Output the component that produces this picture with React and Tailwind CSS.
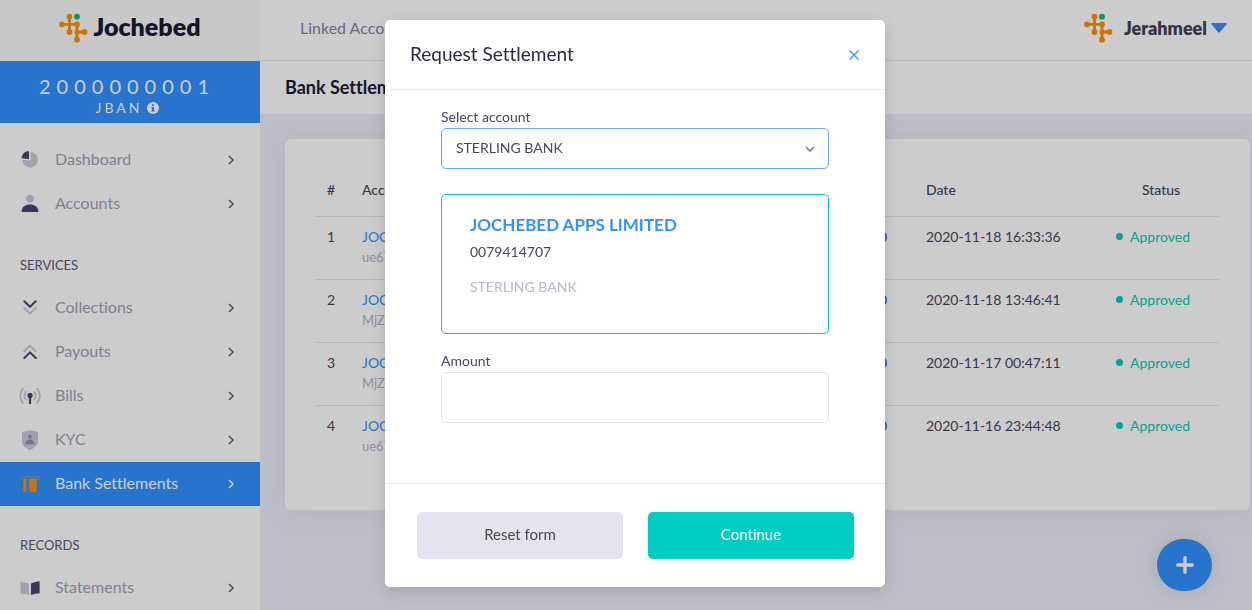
import { useState } from "react";

const services = [
  { name: "Collections", icon: <CollectionsIcon /> },
  { name: "Payouts", icon: <PayoutsIcon /> },
  { name: "Bills", icon: <BillsIcon /> },
  { name: "KYC", icon: <KycIcon /> },
  { name: "Bank Settlements", icon: <BankIcon />, active: true },
];

const settlements = [
  { id: 1, name: "JOCHEBED", ref: "ue6TqLw92x", amount: "1,000.00", date: "2020-11-18 16:33:36" },
  { id: 2, name: "JOCHEBED", ref: "MjZ0pRk41s", amount: "1,000.00", date: "2020-11-18 13:46:41" },
  { id: 3, name: "JOCHEBED", ref: "MjZ0cHe73n", amount: "1,000.00", date: "2020-11-17 00:47:11" },
  { id: 4, name: "JOCHEBED", ref: "ue6TmBf58z", amount: "1,000.00", date: "2020-11-16 23:44:48" },
];

function Logo() {
  return (
    <svg viewBox="0 0 30 30" className="h-[30px] w-[30px] shrink-0" aria-hidden="true">
      <g stroke="#ff9008" strokeWidth="2.8" fill="none">
        <path d="M3 11.3H18V26.7M10.5 3.7V19M18 19H25.5" />
      </g>
      <g fill="#ff9008">
        <circle cx="10.5" cy="3.7" r="2.9" />
        <circle cx="3" cy="11.3" r="2.9" />
        <circle cx="18" cy="11.3" r="2.9" />
        <circle cx="10.5" cy="19" r="2.9" />
        <circle cx="18" cy="19" r="2.5" />
        <circle cx="25.5" cy="19" r="2.9" />
        <circle cx="18" cy="26.7" r="2.9" />
      </g>
      <circle cx="18" cy="3.7" r="2.9" fill="#0abf73" />
    </svg>
  );
}

function Icon({ children }) {
  return (
    <svg viewBox="0 0 24 24" className="h-6 w-6 shrink-0" fill="none" aria-hidden="true">
      {children}
    </svg>
  );
}

function DashboardIcon() {
  return (
    <Icon>
      <path d="M12.6 4A7.7 7.7 0 1 1 4.4 12L12.6 12.6Z" fill="#cac8d8" />
      <path d="M11 2.9V11.2L3.5 10.2A7.6 7.6 0 0 1 11 2.9Z" fill="#4a4370" />
    </Icon>
  );
}

function AccountsIcon() {
  return (
    <Icon>
      <circle cx="12" cy="6.8" r="3.8" fill="#cac8d8" />
      <path d="M3.5 19.2C3.8 15 7.5 12.4 12 12.4S20.2 15 20.5 19.2Q20.5 20 19.6 20H4.4Q3.5 20 3.5 19.2Z" fill="#4a4370" />
    </Icon>
  );
}

function CollectionsIcon() {
  return (
    <Icon>
      <g strokeWidth="2" strokeLinecap="round" strokeLinejoin="round">
        <path d="M6.3 12L12 17.6L17.7 12" stroke="#cac8d8" />
        <path d="M6.3 5.2L12 10.8L17.7 5.2" stroke="#4a4370" />
      </g>
    </Icon>
  );
}

function PayoutsIcon() {
  return (
    <Icon>
      <g strokeWidth="2" strokeLinecap="round" strokeLinejoin="round">
        <path d="M6.3 11.2L12 5.6L17.7 11.2" stroke="#cac8d8" />
        <path d="M6.3 18L12 12.4L17.7 18" stroke="#4a4370" />
      </g>
    </Icon>
  );
}

function BillsIcon() {
  return (
    <Icon>
      <g stroke="#cac8d8" strokeWidth="1.7" strokeLinecap="round">
        <path d="M4.8 4.8Q-0.4 11.8 4.8 18.8M19.2 4.8Q24.4 11.8 19.2 18.8" />
        <path d="M7.9 7.8Q4.9 11.8 7.9 15.8M16.1 7.8Q19.1 11.8 16.1 15.8" />
      </g>
      <circle cx="12" cy="11.4" r="2.6" fill="#4a4370" />
      <path d="M12 12V20" stroke="#4a4370" strokeWidth="2.2" />
    </Icon>
  );
}

function KycIcon() {
  return (
    <Icon>
      <path d="M4 4L12 2.2L20 4V13.2C20 17.4 16.2 20.2 12 22C7.8 20.2 4 17.4 4 13.2Z" fill="#cac8d8" />
      <circle cx="12" cy="8.6" r="2" fill="#9794ad" />
      <path d="M7.4 16.2C7.6 13.3 9.4 11.6 12 11.6S16.4 13.3 16.6 16.2Z" fill="#9794ad" />
    </Icon>
  );
}

function BankIcon() {
  return (
    <Icon>
      <path d="M2.5 4H21.5V8.5H19V20.4H5V8.5H2.5Z" fill="#7a8ea6" opacity="0.85" />
      <rect x="5.6" y="7" width="2.8" height="13" fill="#ff9008" />
      <rect x="8.4" y="8.5" width="2.6" height="12" fill="#3292ff" opacity="0.7" />
      <rect x="11.4" y="7" width="7" height="13" fill="#ff9008" />
    </Icon>
  );
}

function StatementsIcon() {
  return (
    <Icon>
      <path d="M2.5 6Q6.5 5.6 10.8 7.6V19Q6.5 17.4 2.5 17.8Z" fill="#cac8d8" />
      <path d="M13 7.6Q17 5.4 21.6 5.2V17.2Q17 17.2 13 19Z" fill="#4a4370" />
    </Icon>
  );
}

function Chevron({ className }) {
  return (
    <svg viewBox="0 0 10 10" className={className} fill="none" stroke="currentColor" strokeWidth="1.6" aria-hidden="true">
      <path d="M3 1L7 5L3 9" />
    </svg>
  );
}

function NavItem({ name, icon, active }) {
  return (
    <a
      href="#"
      className={
        active
          ? "flex h-11 items-center bg-[#3292ff] pr-6 pl-[18px] text-white"
          : "flex h-11 items-center pr-6 pl-[18px] text-[#a3a0b8]"
      }
    >
      {icon}
      <span className="ml-[13px] flex-1 pb-0.5 text-base">{name}</span>
      <Chevron className={active ? "h-2.5 w-2.5 text-white" : "h-2.5 w-2.5 text-[#645f85]"} />
    </a>
  );
}

function Sidebar() {
  return (
    <aside className="w-[260px] shrink-0 bg-white">
      <div className="flex h-[61px] items-center justify-center gap-1 bg-[#fafafa] pb-1.5">
        <Logo />
        <span className="pb-0.5 text-[25px] font-extrabold text-[#1b1935]">Jochebed</span>
      </div>
      <div className="flex h-[62px] flex-col items-center justify-center bg-[#3292ff] pt-2 pr-1.5 text-white">
        <div className="text-xl leading-6 tracking-[6px]">2000000001</div>
        <div className="flex items-center gap-1 text-sm leading-5">
          <span className="tracking-[3px]">JBAN</span>
          <svg viewBox="0 0 12 12" className="h-3 w-3" aria-hidden="true">
            <circle cx="6" cy="6" r="6" fill="#fff" />
            <path d="M5 2.2H7V4H5ZM4.4 4.9H7V8.2H7.6V9.6H4.4V8.2H5V6.3H4.4Z" fill="#3292ff" />
          </svg>
        </div>
      </div>
      <nav className="pt-[15px]">
        <NavItem name="Dashboard" icon={<DashboardIcon />} />
        <NavItem name="Accounts" icon={<AccountsIcon />} />
        <h4 className="px-5 pt-[29px] pb-[11px] text-[13px] leading-5 text-[#5c5776]">SERVICES</h4>
        {services.map((item) => (
          <NavItem key={item.name} {...item} />
        ))}
        <h4 className="px-5 pt-[29px] pb-[11px] text-[13px] leading-5 text-[#5c5776]">RECORDS</h4>
        <NavItem name="Statements" icon={<StatementsIcon />} />
      </nav>
    </aside>
  );
}

function SettlementTable() {
  return (
    <table className="w-full table-fixed text-sm leading-5 text-[#48465b]">
      <colgroup>
        <col className="w-[31px]" />
        <col />
        <col className="w-[200px]" />
        <col className="w-[192px]" />
        <col className="w-[116px]" />
      </colgroup>
      <thead>
        <tr className="h-[46px] border-b border-[#e6e7f0] text-left">
          <th className="pb-1.5 pl-[11px] font-medium">#</th>
          <th className="pb-1.5 pl-[15px] font-medium">Account</th>
          <th className="pb-1.5 text-center font-medium">Amount</th>
          <th className="pb-1.5 pl-[15px] font-medium">Date</th>
          <th className="pb-1.5 text-center font-medium">Status</th>
        </tr>
      </thead>
      <tbody>
        {settlements.map((row) => (
          <tr key={row.id} className="h-[63px] border-b border-[#e6e7f0] align-top last:border-b-0">
            <td className="pt-2.5 pl-[11px]">{row.id}</td>
            <td className="pt-2.5 pl-[15px]">
              <a href="#" className="block text-[#3292ff]">{row.name}</a>
              <span className="text-[13px] text-[#b5b3c8]">{row.ref}</span>
            </td>
            <td className="pt-2.5 pr-6 text-right">{row.amount}</td>
            <td className="pt-2.5 pl-[15px]">{row.date}</td>
            <td className="pt-2.5">
              <span className="flex items-center justify-center gap-[7px] pr-4 text-[#00cec1]">
                <span className="h-[7px] w-[7px] shrink-0 rounded-full bg-[#00cec1]" />
                Approved
              </span>
            </td>
          </tr>
        ))}
      </tbody>
    </table>
  );
}

function SettlementModal({ onClose }) {
  const [bank, setBank] = useState("STERLING BANK");
  const [amount, setAmount] = useState("");

  function handleReset() {
    setBank("STERLING BANK");
    setAmount("");
  }

  return (
    <div className="fixed inset-0 z-20 overflow-y-auto bg-black/20 pt-5 pl-[18px]">
      <form
        role="dialog"
        aria-label="Request Settlement"
        onSubmit={(e) => e.preventDefault()}
        className="mx-auto w-full max-w-[500px] rounded-[5px] bg-white text-sm text-[#48465b] shadow-[0_4px_16px_rgba(0,0,0,0.15)]"
      >
        <div className="flex h-[70px] items-center justify-between border-b border-[#ebedf2] px-[25px]">
          <h2 className="pb-0.5 text-[19px] text-[#2b2945]">Request Settlement</h2>
          <button type="button" onClick={onClose} aria-label="Close" className="text-[#3292ff]">
            <svg viewBox="0 0 12 12" className="h-3 w-3" stroke="currentColor" strokeWidth="1.3" aria-hidden="true">
              <path d="M1.5 1.5L10.5 10.5M10.5 1.5L1.5 10.5" />
            </svg>
          </button>
        </div>

        <div className="px-14 pt-[17px] pb-[60px]">
          <label htmlFor="bank" className="block pb-px leading-5">Select account</label>
          <div className="relative">
            <select
              id="bank"
              value={bank}
              onChange={(e) => setBank(e.target.value)}
              className="block h-[41px] w-full appearance-none rounded-[5px] border border-[#5fa9fd] bg-white px-3.5 pb-0.5 outline-none"
            >
              <option>STERLING BANK</option>
            </select>
            <Chevron className="pointer-events-none absolute top-4 right-3.5 h-2.5 w-2.5 rotate-90 text-[#7d7a96]" />
          </div>

          <div className="mt-[25px] h-[140px] rounded-[5px] border border-[#00cbbd] px-7 pt-5 leading-5">
            <p className="text-[17px] leading-5 font-bold text-[#3292ff]">JOCHEBED APPS LIMITED</p>
            <p className="mt-[7px]">0079414707</p>
            <p className="mt-[15px] text-[#b9b7ca]">{bank}</p>
          </div>

          <label htmlFor="amount" className="mt-[17px] block pb-px leading-5">Amount</label>
          <input
            id="amount"
            type="text"
            value={amount}
            onChange={(e) => setAmount(e.target.value)}
            className="block h-[51px] w-full rounded-[5px] border border-[#e4e3f0] px-3.5 outline-none"
          />
        </div>

        <div className="grid grid-cols-2 gap-[25px] border-t border-[#ebedf2] py-7 pr-[31px] pl-8">
          <button type="button" onClick={handleReset} className="h-[47px] rounded-[5px] bg-[#e4e4f1] pb-0.5 text-[15px]">
            Reset form
          </button>
          <button type="submit" className="h-[47px] rounded-[5px] bg-[#00cdc1] pb-0.5 text-[15px] text-white">
            Continue
          </button>
        </div>
      </form>
    </div>
  );
}

function App() {
  const [open, setOpen] = useState(true);

  return (
    <div className="flex min-h-screen bg-[#eeeef8] font-['Lato',sans-serif] [font-variant-ligatures:none]">
      <Sidebar />

      <div className="flex min-w-0 flex-1 flex-col">
        <header className="flex h-[61px] items-center justify-between border-b border-[#e6e7f0] bg-white pr-[25px] pb-1 pl-10">
          <a href="#" className="text-base text-[#8381a8]">Linked Accounts</a>
          <button type="button" className="flex items-center">
            <Logo />
            <span className="mr-1 ml-2.5 text-lg font-extrabold text-[#434158]">Jerahmeel</span>
            <svg viewBox="0 0 16 10" className="h-2.5 w-4" fill="#3292ff" aria-hidden="true">
              <path d="M1 0H15Q16.4 .3 15.5 1.4L9 9Q8 10 7 9L.5 1.4Q-.4 .3 1 0Z" />
            </svg>
          </button>
        </header>

        <div className="flex h-[53px] items-center bg-white px-[25px] pb-0.5">
          <h1 className="text-lg font-bold text-[#1b1935]">Bank Settlements</h1>
        </div>

        <main className="flex-1 pt-[25px] pr-0.5 pl-[25px]">
          <div className="rounded-md bg-white px-[31px] pt-[31px] pb-[42px] shadow-[0_0_30px_rgba(82,63,105,0.08)]">
            <SettlementTable />
          </div>
        </main>
      </div>

      <button
        type="button"
        aria-label="New settlement"
        onClick={() => setOpen(true)}
        className="fixed right-10 bottom-[19px] flex h-[52px] w-[55px] items-center justify-center rounded-full bg-[#3292ff] shadow-[0_0_20px_rgba(0,0,0,0.12)]"
      >
        <svg viewBox="0 0 18 18" className="h-[18px] w-[18px]" stroke="#fff" strokeWidth="3.4" strokeLinecap="round" aria-hidden="true">
          <path d="M9 1.8V16.2M1.8 9H16.2" />
        </svg>
      </button>

      {open && <SettlementModal onClose={() => setOpen(false)} />}
    </div>
  );
}

export default App;
